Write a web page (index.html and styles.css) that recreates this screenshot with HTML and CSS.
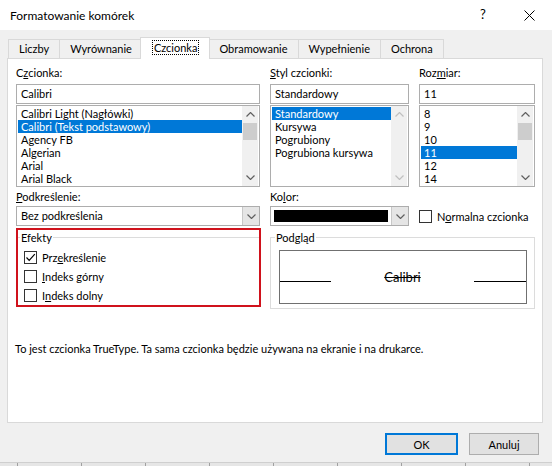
FILE: index.html
```html
<!DOCTYPE html>
<html lang="pl">

<head>
    <meta charset="UTF-8">
    <meta name="viewport" content="width=device-width, initial-scale=1.0">
    <title>Formatowanie komórek</title>
    <link rel="stylesheet" href="styles.css">
</head>

<body>

    <div class="dialog">
        <div class="titlebar">
            <span class="title">Formatowanie komórek</span>
            <span class="caption-btn help">?</span>
            <span class="caption-btn close">
                <svg width="11" height="11" viewBox="0 0 11 11">
                    <path d="M0.5 0.5 L10.5 10.5 M10.5 0.5 L0.5 10.5" stroke="#000" stroke-width="1" fill="none" />
                </svg>
            </span>
        </div>

        <div class="dialog-body">
            <div class="tabs">
                <div class="tab">Liczby</div>
                <div class="tab">Wyrównanie</div>
                <div class="tab active"><span class="focus">Czcionka</span></div>
                <div class="tab">Obramowanie</div>
                <div class="tab">Wypełnienie</div>
                <div class="tab">Ochrona</div>
            </div>

            <div class="panel">
                <!-- font / style / size pickers -->
                <div class="font-grid">
                    <div class="field">
                        <div class="label">C<u>z</u>cionka:</div>
                        <div class="textbox">Calibri</div>
                        <div class="listbox">
                            <ul class="items">
                                <li>Calibri Light (Nagłówki)</li>
                                <li class="selected">Calibri (Tekst podstawowy)</li>
                                <li>Agency FB</li>
                                <li>Algerian</li>
                                <li>Arial</li>
                                <li>Arial Black</li>
                            </ul>
                            <div class="scrollbar">
                                <span class="arrow"><svg width="9" height="5" viewBox="0 0 9 5"><polyline points="0.5,4.5 4.5,0.5 8.5,4.5" /></svg></span>
                                <span class="track"><span class="thumb"></span></span>
                                <span class="arrow"><svg width="9" height="5" viewBox="0 0 9 5"><polyline points="0.5,0.5 4.5,4.5 8.5,0.5" /></svg></span>
                            </div>
                        </div>
                    </div>

                    <div class="field">
                        <div class="label"><u>S</u>tyl czcionki:</div>
                        <div class="textbox">Standardowy</div>
                        <div class="listbox">
                            <ul class="items">
                                <li class="selected">Standardowy</li>
                                <li>Kursywa</li>
                                <li>Pogrubiony</li>
                                <li>Pogrubiona kursywa</li>
                            </ul>
                            <div class="scrollbar disabled">
                                <span class="arrow"><svg width="9" height="5" viewBox="0 0 9 5"><polyline points="0.5,4.5 4.5,0.5 8.5,4.5" /></svg></span>
                                <span class="track"></span>
                                <span class="arrow"><svg width="9" height="5" viewBox="0 0 9 5"><polyline points="0.5,0.5 4.5,4.5 8.5,0.5" /></svg></span>
                            </div>
                        </div>
                    </div>

                    <div class="field">
                        <div class="label">Roz<u>m</u>iar:</div>
                        <div class="textbox">11</div>
                        <div class="listbox">
                            <ul class="items">
                                <li>8</li>
                                <li>9</li>
                                <li>10</li>
                                <li class="selected">11</li>
                                <li>12</li>
                                <li>14</li>
                            </ul>
                            <div class="scrollbar">
                                <span class="arrow"><svg width="9" height="5" viewBox="0 0 9 5"><polyline points="0.5,4.5 4.5,0.5 8.5,4.5" /></svg></span>
                                <span class="track"><span class="thumb"></span></span>
                                <span class="arrow"><svg width="9" height="5" viewBox="0 0 9 5"><polyline points="0.5,0.5 4.5,4.5 8.5,0.5" /></svg></span>
                            </div>
                        </div>
                    </div>
                </div>

                <!-- underline / colour row -->
                <div class="font-grid options">
                    <div class="field">
                        <div class="label"><u>P</u>odkreślenie:</div>
                        <div class="combo">
                            <span class="combo-text">Bez podkreślenia</span>
                            <span class="combo-btn"><svg width="9" height="5" viewBox="0 0 9 5"><polyline points="0.5,0.5 4.5,4.5 8.5,0.5" /></svg></span>
                        </div>
                    </div>

                    <div class="field">
                        <div class="label">Ko<u>l</u>or:</div>
                        <div class="combo">
                            <span class="swatch"></span>
                            <span class="combo-btn"><svg width="9" height="5" viewBox="0 0 9 5"><polyline points="0.5,0.5 4.5,4.5 8.5,0.5" /></svg></span>
                        </div>
                    </div>

                    <div class="field normal-font">
                        <label class="check">
                            <span class="box"></span>
                            <span>N<u>o</u>rmalna czcionka</span>
                        </label>
                    </div>
                </div>

                <!-- effects and preview -->
                <div class="effects-grid">
                    <div class="highlight">
                        <fieldset class="group effects">
                            <legend>Efekty</legend>
                            <label class="check">
                                <span class="box">
                                    <svg width="11" height="11" viewBox="0 0 11 11"><polyline points="1.5,5.5 4.2,8.3 9.8,2.2" /></svg>
                                </span>
                                <span>Prz<u>e</u>kreślenie</span>
                            </label>
                            <label class="check">
                                <span class="box"></span>
                                <span><u>I</u>ndeks górny</span>
                            </label>
                            <label class="check">
                                <span class="box"></span>
                                <span>I<u>n</u>deks dolny</span>
                            </label>
                        </fieldset>
                    </div>

                    <fieldset class="group preview">
                        <legend>Podgląd</legend>
                        <div class="preview-box">
                            <span class="baseline"></span>
                            <span class="sample">Calibri</span>
                            <span class="baseline"></span>
                        </div>
                    </fieldset>
                </div>

                <p class="note">To jest czcionka TrueType. Ta sama czcionka będzie używana na ekranie i na drukarce.</p>
            </div>

            <div class="buttons">
                <button class="btn default">OK</button>
                <button class="btn">Anuluj</button>
            </div>
        </div>
    </div>
    <div class="sheet-edge"></div>

</body>

</html>
```

FILE: styles.css
```css
body {
    font-family: 'Lato', 'Noto Sans', sans-serif;
    font-size: 11px;
    margin: 0;
    padding: 0;
    width: 552px;
    height: 466px;
    overflow: hidden;
    background-color: #e6e6e6;
    color: #000;
}

u {
    text-underline-offset: 1px;
}

.dialog {
    height: 462px;
    background-color: #f0f0f0;
    border-bottom: 1px solid #cfcfcf;
}

/* title bar */

.titlebar {
    height: 30px;
    display: flex;
    align-items: center;
    padding-left: 10px;
    background-color: #fff;
}

.title {
    flex: 1;
    font-size: 12px;
}

.caption-btn {
    width: 46px;
    height: 30px;
    display: flex;
    align-items: center;
    justify-content: center;
}

.help {
    font-size: 13px;
    padding-bottom: 2px;
    box-sizing: border-box;
}

/* tabs */

.dialog-body {
    padding: 0 9px 0 7px;
}

.tabs {
    height: 28px;
    display: flex;
    align-items: flex-end;
    padding-left: 2px;
}

.tab {
    height: 19px;
    box-sizing: border-box;
    padding: 0 10px;
    margin-left: -1px;
    line-height: 17px;
    border: 1px solid #d9d9d9;
    border-bottom: none;
    background-color: #f0f0f0;
}

.tab.active {
    height: 22px;
    margin: 0 -2px -1px -3px;
    padding: 0 11px 0 12px;
    line-height: 19px;
    background-color: #fff;
    position: relative;
    z-index: 1;
}

.tab.active + .tab {
    margin-left: 0;
}

.focus {
    outline: 1px dotted #000;
    outline-offset: 0;
    padding: 0 1px;
}

.panel {
    height: 365px;
    box-sizing: border-box;
    padding: 6px 7px 0 8px;
    border: 1px solid #d9d9d9;
    background-color: #fff;
}

/* pickers */

.font-grid {
    display: grid;
    grid-template-columns: 244px 139px 116px;
    column-gap: 10px;
}

.font-grid.options {
    margin-top: 2px;
}

.label {
    height: 15px;
    line-height: 15px;
    margin-bottom: 4px;
}

.options .label {
    margin-bottom: 2px;
}

.textbox {
    height: 20px;
    box-sizing: border-box;
    padding-left: 4px;
    line-height: 18px;
    border: 1px solid #adadad;
    margin-bottom: 1px;
}

.listbox {
    height: 82px;
    box-sizing: border-box;
    border: 1px solid #adadad;
    padding: 1px;
    display: flex;
}

.items {
    flex: 1;
    list-style: none;
    margin: 0;
    padding: 0;
}

.items li {
    height: 13px;
    line-height: 13px;
    padding-left: 3px;
    white-space: nowrap;
}

.items li.selected {
    background-color: #0078d7;
    color: #fff;
}

.scrollbar {
    width: 16px;
    margin: -1px 0;
    display: flex;
    flex-direction: column;
    background-color: #f0f0f0;
}

.arrow {
    height: 17px;
    display: flex;
    align-items: center;
    justify-content: center;
}

.arrow polyline,
.combo-btn polyline {
    fill: none;
    stroke: #606060;
    stroke-width: 1.2;
}

.scrollbar.disabled polyline {
    stroke: #c0c0c0;
}

.track {
    flex: 1;
}

.thumb {
    display: block;
    height: 17px;
    margin: 0 1px;
    background-color: #cdcdcd;
}

.combo {
    height: 20px;
    box-sizing: border-box;
    border: 1px solid #adadad;
    display: flex;
    background-color: #fff;
}

.combo-text {
    flex: 1;
    padding-left: 4px;
    line-height: 18px;
}

.swatch {
    flex: 1;
    margin: 3px;
    background-color: #000;
}

.combo-btn {
    width: 16px;
    display: flex;
    align-items: center;
    justify-content: center;
    background-color: #e5e5e5;
    border-left: 1px solid #c8c8c8;
}

.normal-font {
    display: flex;
    align-items: flex-end;
}

.normal-font .check {
    height: 20px;
    white-space: nowrap;
}

/* checkboxes */

.check {
    height: 19px;
    display: flex;
    align-items: center;
    gap: 5px;
}

.box {
    flex: none;
    width: 13px;
    height: 13px;
    box-sizing: border-box;
    border: 1px solid #333;
    background-color: #fff;
    display: flex;
    align-items: center;
    justify-content: center;
}

.box polyline {
    fill: none;
    stroke: #000;
    stroke-width: 1.2;
}

/* effects & preview */

.effects-grid {
    display: grid;
    grid-template-columns: 245px 265px;
    column-gap: 9px;
    align-items: start;
    margin-top: 2px;
}

.highlight {
    border: 2px solid #d0121c;
}

.group {
    margin: 0;
    border: 1px solid #dcdcdc;
}

.group legend {
    line-height: 15px;
    padding: 0 1px;
    margin-left: -4px;
}

.effects {
    padding: 3px 0 0 6px;
    border-width: 1px 0 0 0;
}

.preview {
    margin-top: 2px;
    padding: 5px 7px 4px 8px;
}

.preview-box {
    height: 54px;
    box-sizing: border-box;
    border: 1px solid #707070;
    display: grid;
    grid-template-columns: 51px 1fr 52px;
    align-items: center;
}

.baseline {
    height: 1px;
    margin-top: 8px;
    background-color: #000;
}

.sample {
    font-family: 'Lato', sans-serif;
    font-size: 13px;
    text-align: center;
    text-decoration: line-through;
    line-height: 18px;
}

.note {
    margin: 32px 0 0 -1px;
    line-height: 15px;
}

/* dialog buttons */

.buttons {
    display: flex;
    justify-content: flex-end;
    gap: 11px;
    margin-top: 10px;
    padding-right: 4px;
}

.btn {
    width: 70px;
    height: 22px;
    font-family: inherit;
    font-size: 11px;
    background-color: #e1e1e1;
    border: 1px solid #adadad;
    padding: 0;
}

.btn.default {
    width: 73px;
    border: 2px solid #0078d7;
}

.sheet-edge {
    height: 3px;
    background: repeating-linear-gradient(to right, transparent 0 17px, #a0a0a0 17px 18px, transparent 18px 64px);
}
```
